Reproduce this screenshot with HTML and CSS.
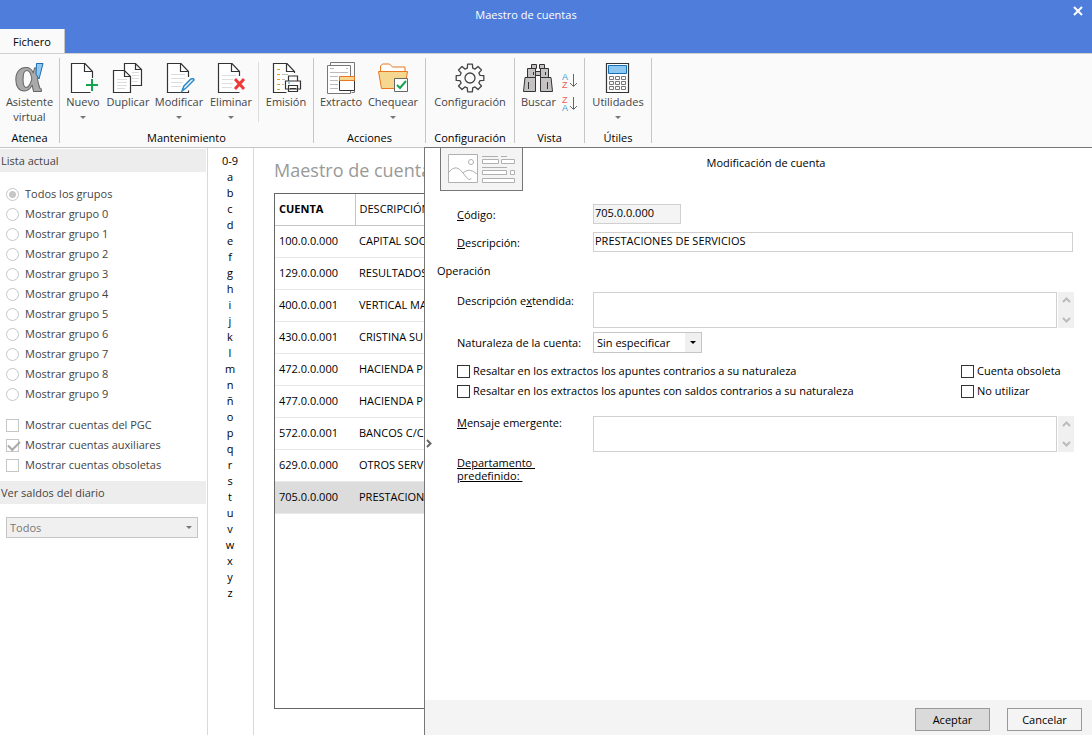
FILE: index.html
```html
<!DOCTYPE html>
<html lang="es">
<head>
<meta charset="utf-8">
<title>Maestro de cuentas</title>
<link rel="stylesheet" href="styles.css">
</head>
<body>
<header class="top">
  <div class="titlebar"><h1 class="title">Maestro de cuentas</h1><button class="close" aria-label="Cerrar"><svg width="10" height="10"><path d="M1 1l8 8M9 1l-8 8" stroke="#fff" stroke-width="2"/></svg></button></div>
  <nav class="tabs"><button class="tab">Fichero</button></nav>
</header>
<div class="ribbon">
  <section class="group atenea">
    <div class="tools">
      <button class="tool"><svg class="icon" viewBox="0 0 32 32"><text x="1" y="29" class="alpha">α</text><path d="M23.500 1.500h6.500l-4 15.500-3-5z" fill="#8ec8f0" stroke="#1f6db0"/></svg><span>Asistente<br>virtual</span></button>
    </div>
    <h2 class="group-name">Atenea</h2>
  </section>
  <section class="group mant">
    <div class="tools">
      <button class="tool nuevo"><svg class="icon" viewBox="0 0 32 32"><path d="M25.500 16V9.500L18 1.500H4.500v29h19M17.500 1.500v8h8" class="ink"/><path d="M25 17v12M19 23h12" stroke="#14a44d" stroke-width="2"/></svg><span>Nuevo</span><i class="caret"></i></button>
      <button class="tool dupl"><svg class="icon" viewBox="0 0 32 32"><path d="M12.500 8V1.500h11l6 6v16h-10M23.500 1.500v6h6M1.500 8.500h11l6 6v16h-17zM12.500 8.500v6h6" class="ink"/><path d="M5 17.500h10M5 20.500h10M5 23.500h10M5 26.500h8M20 10.500h7M20 13.500h7M20 16.500h7M20 19.500h6" stroke="#ddd"/></svg><span>Duplicar</span></button>
      <button class="tool modif"><svg class="icon" viewBox="0 0 32 32"><path d="M25.500 15V9.500L18 1.500H4.500v29h21v-2M17.500 1.500v8h8" class="ink"/><path d="M8 12.500h14M8 16.500h14M8 20.500h12M8 24.500h10" stroke="#ddd"/><path d="M19 29l2-5 7-7q3-1 3 1l-8 8z" fill="#fff" stroke="#2687c9" stroke-width="1.500"/></svg><span>Modificar</span><i class="caret"></i></button>
      <button class="tool elim"><svg class="icon" viewBox="0 0 32 32"><path d="M24.500 14V9.500L17 1.500H3.500v29h21M16.500 1.500v8h8" class="ink"/><path d="M7 13.500h14M7 17.500h11M7 21.500h11M7 25.500h10" stroke="#ddd"/><path d="M20 17l9 10M29 17l-9 10" stroke="#ed3b3b" stroke-width="3"/></svg><span>Eliminar</span><i class="caret"></i></button>
      <button class="tool emision"><svg class="icon" viewBox="0 0 32 32"><path d="M24.500 11V9.500L17 1.500H3.500v29h13M16.500 1.500v8h8" class="ink"/><path d="M7 7.500h3M7 12.500h3M7 17.500h3M7 22.500h3M7 27.500h3" stroke="#f59c0b"/><path d="M12 12.500h6M12 17.500h3M12 22.500h2" stroke="#bbb"/><path d="M18.500 19v-5h9v5M15.500 27v-8h15v8zM18.500 23.500h9v6h-9zM20 26.500h6" class="ink"/><path d="M18 21h2" stroke="#2687c9"/></svg><span>Emisión</span></button>
    </div>
    <h2 class="group-name">Mantenimiento</h2>
  </section>
  <section class="group acc">
    <div class="tools">
      <button class="tool extr"><svg class="icon" viewBox="0 0 32 32"><path d="M5.500 3V.500h24v30h-3" fill="none" stroke="#777"/><path d="M2.500 3.500h23v28h-23z" fill="#fff" stroke="#777"/><path d="M5 6.500h4M21 6.500h2M5 10.500h18M5 14.500h8M5 18.500h8M5 22.500h8M5 26.500h8" stroke="#bbb"/><path d="M14.500 15.500h15v13h-15z" fill="#fff" stroke="#333"/><path d="M14.500 14.500h15v4h-15z" fill="#f6d790" stroke="#e87722"/></svg><span>Extracto</span></button>
      <button class="tool cheq"><svg class="icon" viewBox="0 0 32 32"><path d="M3.500 9V4l2-2h7l3 3h12.500v5" fill="#fff" stroke="#e87722"/><path d="M1.500 9.500h29l-3 17h-23z" fill="#f6d790" stroke="#e87722"/><path d="M17.500 16.500h13v13h-13z" fill="#fff" stroke="#666"/><path d="M20 23l3 3 6-7" fill="none" stroke="#14a44d" stroke-width="2"/></svg><span>Chequear</span><i class="caret"></i></button>
    </div>
    <h2 class="group-name">Acciones</h2>
  </section>
  <section class="group conf">
    <div class="tools">
      <button class="tool"><svg class="icon" viewBox="0 0 32 32"><path d="M25.900 13.300L29.800 13.600V18.400L25.900 18.700L24.900 21.100L27.500 24L24 27.500L21.100 24.900L18.700 25.900L18.400 29.800H13.600L13.300 25.900L10.900 24.900L8 27.500L4.500 24L7.100 21.100L6.100 18.700L2.200 18.400V13.600L6.100 13.300L7.100 10.900L4.500 8L8 4.500L10.900 7.100L13.300 6.100L13.600 2.200H18.400L18.700 6.100L21.100 7.100L24 4.500L27.500 8L24.900 10.900Z" fill="none" stroke="#444" stroke-width="1.300" stroke-linejoin="round"/><circle cx="16" cy="16" r="5" fill="none" stroke="#444" stroke-width="1.300"/></svg><span>Configuración</span></button>
    </div>
    <h2 class="group-name">Configuración</h2>
  </section>
  <section class="group vista">
    <div class="tools">
      <button class="tool"><svg class="icon" viewBox="0 0 32 32"><path d="M9.500 2.500h5v4h-5zM17.500 2.500h5v4h-5zM5.500 6.500h8v9h-8zM18.500 6.500h8v9h-8zM13.500 9.500h5v4h-5zM3 15.500h10.500v14h-12zM18.500 15.500H29l1.500 14h-12z" fill="#c4c2c2" stroke="#333"/><path d="M11.500 10v3M23.500 10v3M6.500 20v7M25.500 20v7" stroke="#333"/></svg><span>Buscar</span></button>
      <div class="sorts">
        <button class="sort" aria-label="Orden ascendente"><svg width="16" height="20"><text x="0" y="9" class="az blue">A</text><text x="0" y="17" class="az red">Z</text><path d="M11.500 3v12M8 12l3.500 3.500L15 12" class="arrow"/></svg></button>
        <button class="sort" aria-label="Orden descendente"><svg width="16" height="20"><text x="0" y="9" class="az red">Z</text><text x="0" y="17" class="az blue">A</text><path d="M11.500 3v12M8 12l3.500 3.500L15 12" class="arrow"/></svg></button>
      </div>
    </div>
    <h2 class="group-name">Vista</h2>
  </section>
  <section class="group util">
    <div class="tools">
      <button class="tool"><svg class="icon" viewBox="0 0 32 32"><path d="M4.500 1.500h22v29h-22z" class="ink"/><path d="M6.500 3.500h18v8h-18z" fill="#8ec8f0" stroke="#1570b8"/><path d="M7.500 14.500h4v3h-4zM13.500 14.500h4v3h-4zM19.500 14.500h4v3h-4zM7.500 19.500h4v3h-4zM13.500 19.500h4v3h-4zM19.500 19.500h4v3h-4zM7.500 24.500h4v3h-4zM13.500 24.500h4v3h-4zM19.500 24.500h4v3h-4z" fill="none" stroke="#777"/></svg><span>Utilidades</span><i class="caret"></i></button>
    </div>
    <h2 class="group-name">Útiles</h2>
  </section>
</div>
<main class="workspace">
  <aside class="filters">
    <h2 class="filter-head">Lista actual</h2>
    <div class="options">
      <label class="option"><input type="radio" name="g" checked disabled>Todos los grupos</label>
      <label class="option"><input type="radio" name="g" disabled>Mostrar grupo 0</label>
      <label class="option"><input type="radio" name="g" disabled>Mostrar grupo 1</label>
      <label class="option"><input type="radio" name="g" disabled>Mostrar grupo 2</label>
      <label class="option"><input type="radio" name="g" disabled>Mostrar grupo 3</label>
      <label class="option"><input type="radio" name="g" disabled>Mostrar grupo 4</label>
      <label class="option"><input type="radio" name="g" disabled>Mostrar grupo 5</label>
      <label class="option"><input type="radio" name="g" disabled>Mostrar grupo 6</label>
      <label class="option"><input type="radio" name="g" disabled>Mostrar grupo 7</label>
      <label class="option"><input type="radio" name="g" disabled>Mostrar grupo 8</label>
      <label class="option"><input type="radio" name="g" disabled>Mostrar grupo 9</label>
    </div>
    <div class="options checks">
      <label class="option"><input type="checkbox" disabled>Mostrar cuentas del PGC</label>
      <label class="option"><input type="checkbox" checked disabled>Mostrar cuentas auxiliares</label>
      <label class="option"><input type="checkbox" disabled>Mostrar cuentas obsoletas</label>
    </div>
    <h2 class="filter-head">Ver saldos del diario</h2>
    <div class="select-box balances"><select aria-label="Ver saldos del diario" disabled><option>Todos</option></select><i class="drop"></i></div>
  </aside>
  <nav class="letters" aria-label="Índice">
    <a href="#">0-9</a><a href="#">a</a><a href="#">b</a><a href="#">c</a><a href="#">d</a><a href="#">e</a><a href="#">f</a><a href="#">g</a><a href="#">h</a><a href="#">i</a><a href="#">j</a><a href="#">k</a><a href="#">l</a><a href="#">m</a><a href="#">n</a><a href="#">ñ</a><a href="#">o</a><a href="#">p</a><a href="#">q</a><a href="#">r</a><a href="#">s</a><a href="#">t</a><a href="#">u</a><a href="#">v</a><a href="#">w</a><a href="#">x</a><a href="#">y</a><a href="#">z</a>
  </nav>
  <section class="list">
    <h2 class="list-title">Maestro de cuentas</h2>
    <div class="table-frame">
      <table class="accounts">
        <thead><tr><th class="code">CUENTA</th><th class="desc">DESCRIPCIÓN</th></tr></thead>
        <tbody>
          <tr><td>100.0.0.000</td><td>CAPITAL SOCIAL</td></tr>
          <tr><td>129.0.0.000</td><td>RESULTADOS</td></tr>
          <tr><td>400.0.0.001</td><td>VERTICAL MA</td></tr>
          <tr><td>430.0.0.001</td><td>CRISTINA SU</td></tr>
          <tr><td>472.0.0.000</td><td>HACIENDA P</td></tr>
          <tr><td>477.0.0.000</td><td>HACIENDA P</td></tr>
          <tr><td>572.0.0.001</td><td>BANCOS C/C</td></tr>
          <tr><td>629.0.0.000</td><td>OTROS SERVICIOS</td></tr>
          <tr class="selected"><td>705.0.0.000</td><td>PRESTACIONES</td></tr>
        </tbody>
      </table>
    </div>
  </section>
  <section class="detail">
    <div class="detail-body">
      <button class="collapse" aria-label="Contraer"><svg width="7" height="9"><path d="M1 1l3.500 3.500L1 8" fill="none" stroke="#666" stroke-width="2"/></svg></button>
      <form class="form" id="account">
        <div class="form-head">
          <button type="button" class="card" aria-label="Vista de ficha"><svg width="69" height="31"><g fill="#fff" stroke="#b0b0b0"><path d="M1.500 .500h29v28h-29z"/><circle cx="24" cy="8" r="2.500"/><path d="M2 18q7-9 14 1t8 5M16 19q6-6 14 1" fill="none"/><path d="M35.500 5.500h16v4h-16zM54.500 5.500h13v4h-13zM35.500 16.500h24v4h-24zM63.500 16.500h4v4h-4zM35.500 24.500h32v4h-32z"/><path d="M35 2.500h16M54 2.500h6M35 13.500h25"/></g></svg></button>
          <h2 class="form-title">Modificación de cuenta</h2>
        </div>
        <div class="fields first">
          <label for="code"><u>C</u>ódigo:</label><input id="code" class="text code-input" value="705.0.0.000" readonly>
          <label for="desc"><u>D</u>escripción:</label><input id="desc" class="text" value="PRESTACIONES DE SERVICIOS">
        </div>
        <h3 class="section-name">Operación</h3>
        <div class="fields">
          <label for="ext">Descripción e<u>x</u>tendida:</label>
          <div class="area"><textarea id="ext"></textarea><span class="scroll"><svg width="9" height="6"><path d="M1 5l3.500-3.500L8 5"/></svg><svg width="9" height="6"><path d="M1 1l3.500 3.500L8 1"/></svg></span></div>
          <label for="nat" class="mid">Naturaleza de la cuenta:</label>
          <div class="select-box nature"><select id="nat"><option>Sin especificar</option></select><i class="drop"></i></div>
        </div>
        <div class="flags">
          <label class="flag"><input type="checkbox">Resaltar en los extractos los apuntes contrarios a su naturaleza</label>
          <label class="flag"><input type="checkbox">Cuenta obsoleta</label>
          <label class="flag"><input type="checkbox">Resaltar en los extractos los apuntes con saldos contrarios a su naturaleza</label>
          <label class="flag"><input type="checkbox">No utilizar</label>
        </div>
        <div class="fields">
          <label for="msg" class="tight"><u>M</u>ensaje emergente:</label>
          <div class="area"><textarea id="msg"></textarea><span class="scroll"><svg width="9" height="6"><path d="M1 5l3.500-3.500L8 5"/></svg><svg width="9" height="6"><path d="M1 1l3.500 3.500L8 1"/></svg></span></div>
          <a href="#" class="dept">Departamento&nbsp;<br>predefinido:&nbsp;</a>
        </div>
      </form>
    </div>
    <footer class="actions"><button class="btn primary" form="account">Aceptar</button><button class="btn">Cancelar</button></footer>
  </section>
</main>
</body>
</html>
```
FILE: styles.css
```css
* { box-sizing: border-box; }
body { margin: 0; min-height: 100vh; display: flex; flex-direction: column; font: 11px/16px "Open Sans", "Noto Sans", sans-serif; color: #000; background: #fff; }
button, input, select, textarea { font: inherit; color: inherit; margin: 0; border-radius: 0; }
button { background: none; border: 0; padding: 0; }
h1, h2, h3 { margin: 0; font-size: inherit; font-weight: 400; }
a { color: inherit; text-decoration: none; }

.top { background: #4e7ddb; }
.titlebar { height: 29px; display: flex; align-items: center; padding: 0 9px 0 0; color: #fff; }
.title { flex: 1; text-align: center; padding-right: 21px; }
.close { align-self: flex-start; margin-top: 6px; display: flex; }
.tabs { display: flex; height: 24px; }
.tab { width: 65px; height: 25px; background: #fafafa; border-right: 1px solid #c6c6c6; }

.ribbon { display: flex; height: 95px; padding-top: 4px; background: #fafafa; border-top: 1px solid #d0d0d0; border-bottom: 1px solid #c6c6c6; }
.group { height: 85px; display: flex; flex-direction: column; border-right: 1px solid #c6c6c6; }
.tools { flex: 1; display: flex; justify-content: center; padding-top: 4px; }
.mant .tools, .acc .tools { justify-content: flex-start; }
.tool { display: flex; flex-direction: column; align-items: center; justify-content: flex-start; flex: none; color: #444; line-height: 15px; white-space: nowrap; }
.icon { width: 32px; height: 32px; overflow: visible; }
.group-name { text-align: center; line-height: 16px; margin-bottom: -3px; }
.caret { border: 3px solid transparent; border-top-color: #777; border-bottom: 0; margin-top: 7px; }
.ink { fill: #fff; stroke: #333; stroke-width: 1.2; }
.alpha { font: bold 50px "Liberation Serif", serif; fill: #aaa; stroke: #666; }
.atenea { width: 60px; }
.mant { width: 254px; }
.acc { width: 112px; }
.conf { width: 89px; }
.vista { width: 70px; }
.util { width: 67px; }
.nuevo, .elim { width: 46px; }
.dupl { width: 44px; }
.modif { width: 58px; }
.emision { width: 55px; height: 60px; margin-left: 4px; border-left: 1px solid #ddd; }
.extr { width: 54px; }
.cheq { width: 50px; }
.sorts { display: flex; flex-direction: column; gap: 3px; padding: 9px 0 0 6px; }
.sort { display: flex; }
.az { font: 9px "Liberation Sans", sans-serif; }
.blue { fill: #3a97d3; }
.red { fill: #ed5b5b; }
.arrow { fill: none; stroke: #666; }

.workspace { flex: 1; display: flex; min-height: 0; }
.filters { width: 208px; flex: none; border-right: 1px solid #d9d9d9; padding: 1px 1px 0 0; color: #444; }
.filter-head { height: 23px; line-height: 23px; padding-left: 1px; background: #ededed; }
.options { padding: 12px 6px 0; }
.checks { padding: 11px 6px 6px; }
.option { display: flex; align-items: center; gap: 6px; height: 20px; }
.option input, .flag input { appearance: none; width: 13px; height: 13px; flex: none; border: 1px solid #c6c6c6; background: #fff; }
.option input[type=radio] { border-radius: 50%; }
.option input[type=radio]:checked { background: radial-gradient(#c6c6c6 0 3px, #fff 4px); }
.option input[type=checkbox]:checked::after { content: ""; display: block; width: 10px; height: 5px; margin: 1px 0 0 1px; border: solid #aaa; border-width: 0 0 2px 2px; transform: rotate(-45deg); }
.select-box { position: relative; display: flex; }
.select-box select { appearance: none; width: 100%; height: 21px; border: 1px solid #c6c6c6; background: #fff; padding: 0 3px; opacity: 1; }
.drop { position: absolute; right: 1px; top: 1px; bottom: 1px; width: 16px; display: grid; place-items: center; background: #f0f0f0; pointer-events: none; }
.drop::after { content: ""; border: 3px solid transparent; border-top-color: currentColor; border-bottom: 0; }
.balances { margin: 13px 8px 0 6px; color: #777; }
.balances select { background: #f0f0f0; }

.letters { width: 46px; flex: none; padding: 5px 1px 0 0; display: flex; flex-direction: column; align-items: center; border-right: 1px solid #d9d9d9; }
.list { width: 170px; flex: none; padding: 10px 0 26px 20px; overflow: hidden; display: flex; flex-direction: column; }
.list-title { font-size: 18px; line-height: 25px; white-space: nowrap; color: #999; margin-bottom: 10px; }
.table-frame { flex: 1; width: 300px; border: 1px solid #666; }
.accounts { table-layout: fixed; width: 100%; border-collapse: collapse; line-height: 16px; }
.accounts th, .accounts td { height: 32px; padding: 0 4px; text-align: left; font-weight: 400; border-bottom: 1px solid #e8e8e8; white-space: nowrap; }
.accounts th { height: 31px; border-bottom-color: #c6c6c6; }
.accounts .code { width: 80px; font-weight: 700; border-right: 1px solid #c6c6c6; }
.selected { background: #dcdcdc; }

.detail { flex: 1; min-width: 0; margin-top: -1px; border-left: 1px solid #777; border-top: 1px solid #777; display: flex; flex-direction: column; background: #fff; }
.detail-body { flex: 1; display: flex; padding-right: 19px; }
.collapse { width: 12px; flex: none; margin-top: 38px; display: flex; align-items: center; padding-left: 1px; }
.form { flex: 1; min-width: 0; }
.form-head { display: flex; height: 43px; padding-left: 3px; }
.card { width: 83px; height: 43px; flex: none; border: 1px solid #777; border-top: 0; background: #f4f4f4; display: grid; place-items: center; }
.form-title { flex: 1; text-align: center; padding: 7px 64px 0 0; }
.fields { display: grid; grid-template-columns: 136px 1fr; row-gap: 4px; padding-left: 20px; align-items: start; }
.first { padding-top: 13px; row-gap: 8px; }
.fields label { line-height: 18px; white-space: nowrap; }
.first label { padding-top: 2px; }
.fields .mid { padding-top: 2px; }
.fields .tight { line-height: 14px; }
.text { width: 100%; height: 20px; border: 1px solid #d0d0d0; padding: 0 1px 3px; background: #fff; }
.code-input { width: 88px; background: #f4f4f4; }
.section-name { line-height: 16px; margin: 11px 0 13px; }
.area { display: flex; gap: 1px; margin-right: -1px; }
.area textarea { flex: 1; height: 36px; border: 1px solid #d0d0d0; resize: none; overflow: hidden; }
.scroll { width: 16px; background: #f0f0f0; display: flex; flex-direction: column; justify-content: space-between; align-items: center; padding: 5px 0; }
.scroll path { fill: none; stroke: #bbb; stroke-width: 2; }
.nature { width: 109px; }
.flags { display: grid; grid-template-columns: 1fr 112px; padding: 8px 0 15px 20px; }
.flag { display: flex; align-items: center; gap: 3px; height: 20px; white-space: nowrap; }
.flag input { border-color: #333; }
.dept { line-height: 13px; text-decoration: underline; }
.actions { height: 35px; background: #f4f4f4; display: flex; justify-content: flex-end; gap: 17px; padding: 8px 10px 0 0; }
.btn { width: 75px; height: 23px; border: 1px solid #999; }
.primary { background: #dadada; }
```
